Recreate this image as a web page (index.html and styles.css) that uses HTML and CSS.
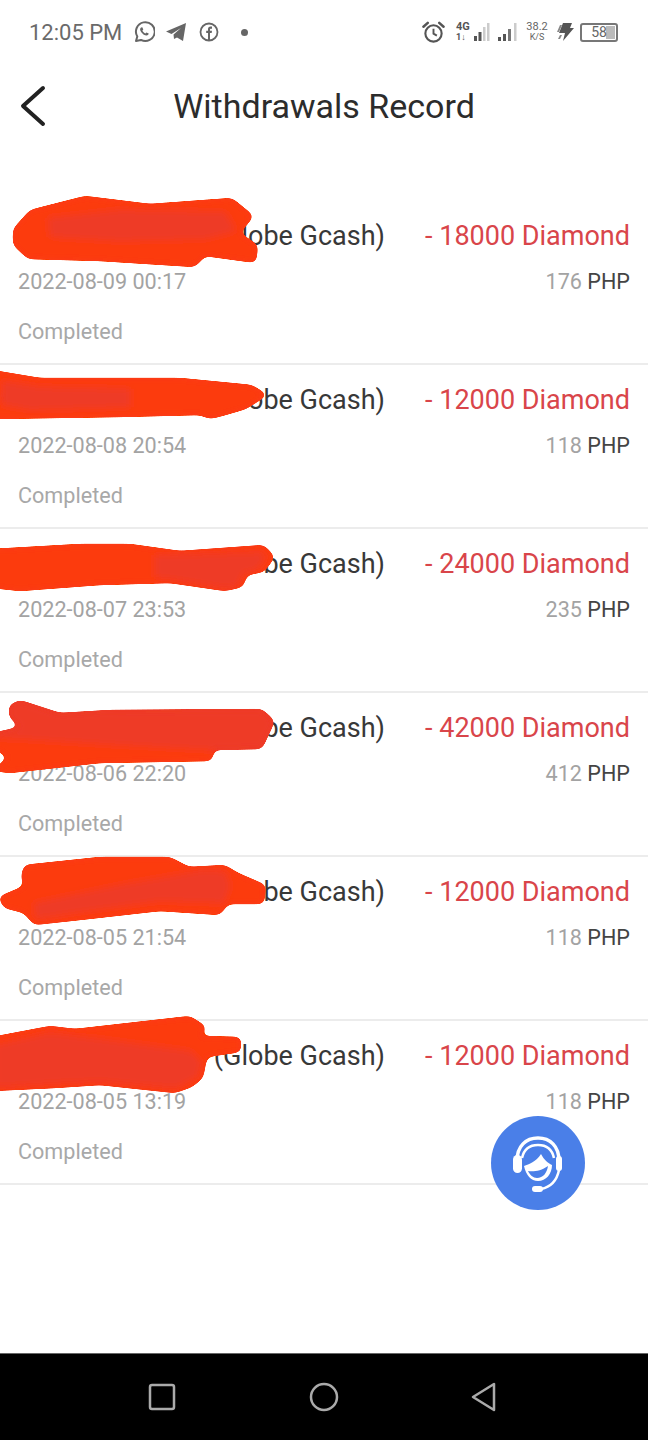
FILE: index.html
```html
<!DOCTYPE html>
<html lang="en">
<head>
  <meta charset="UTF-8">
  <title>Withdrawals Record</title>
  <meta name="viewport" content="width=device-width, initial-scale=1.0">
  <link rel="stylesheet" href="styles.css">
</head>
<body>
<div class="page">

  <!-- rounds off the corners of the marker strokes -->
  <svg class="defs" width="0" height="0">
    <filter id="marker" x="-10%" y="-30%" width="120%" height="160%">
      <feGaussianBlur stdDeviation="3.500"/>
      <feColorMatrix values="1 0 0 0 0  0 1 0 0 0  0 0 1 0 0  0 0 0 16 -7"/>
    </filter>
  </svg>

  <!-- Status bar -->
  <div class="status-bar">
    <div class="status-left">
      <span class="clock">12:05 PM</span>
      <svg class="ic-whatsapp" viewBox="0 0 22 24" width="22" height="24">
        <path d="M3 21l1.300-4.600A9.400 9.400 0 1 1 8 19.900z" fill="none" stroke="#666" stroke-width="2" stroke-linejoin="round"/>
        <path d="M8 7.500c-1.300 1-1.200 2.800.3 4.800s3.600 3.400 5.300 3.300c1.300-.1 2.100-1 2.100-2l-2.300-1.200-1 1c-1.200-.4-2.500-1.800-3-3l.9-1L9.300 7.300z" fill="#666"/>
      </svg>
      <svg class="ic-telegram" viewBox="0 0 22 22" width="22" height="22">
        <path d="M1 10.500L21 2l-3 18-6-3.500-3 1.500-.5-4.500L16 7l-9.500 6z" fill="#666"/>
      </svg>
      <svg class="ic-facebook" viewBox="0 0 20 20" width="20" height="20">
        <circle cx="10" cy="10" r="8.500" fill="none" stroke="#666" stroke-width="1.800"/>
        <path d="M9 18v-7H7.200V8.700H9V7.200C9 5.400 10 4.600 11.500 4.600h1.500v2.200h-1c-.7 0-1 .3-1 1v.9h2l-.3 2.300H11v7z" fill="#666"/>
      </svg>
      <span class="dot"></span>
    </div>
    <div class="status-right">
      <svg class="ic-alarm" viewBox="0 0 24 24" width="23" height="24">
        <circle cx="12" cy="13.500" r="8.500" fill="none" stroke="#555" stroke-width="2.200"/>
        <path d="M12 8.500v5.200l3.500 2" fill="none" stroke="#555" stroke-width="2"/>
        <path d="M1.500 6.500L6 2.500M22.500 6.500L18 2.500" stroke="#555" stroke-width="2.600" stroke-linecap="round"/>
      </svg>
      <div class="net-type">
        <div class="net-text"><span class="net-g">4G</span><span class="net-arrows">1↓</span></div>
        <svg viewBox="0 0 16 20" width="16" height="20">
          <rect x="0" y="14" width="3" height="5" fill="#555"/>
          <rect x="4.500" y="10" width="3" height="9" fill="#555"/>
          <rect x="9" y="5" width="2.500" height="14" fill="#ccc"/>
          <rect x="13" y="1" width="2.500" height="18" fill="#ccc"/>
        </svg>
      </div>
      <svg class="ic-signal" viewBox="0 0 21 20" width="21" height="20">
        <rect x="1" y="15" width="3" height="4" fill="#555"/>
        <rect x="6" y="12" width="3" height="7" fill="#555"/>
        <rect x="11" y="7" width="3" height="12" fill="#777"/>
        <rect x="17" y="1" width="2.500" height="18" fill="#ccc"/>
      </svg>
      <div class="speed"><span>38.2</span><span class="speed-unit">K/S</span></div>
      <svg class="ic-bolt" viewBox="0 0 18 20" width="18" height="20">
        <path d="M6 1h9l-2 5h4L6 19l2-8H2z" fill="#555"/>
        <path d="M3 3h2L2 10H0zM3 13h2l-2 4H1z" fill="#888"/>
      </svg>
      <div class="battery"><span class="battery-level"></span><span class="battery-num">58</span></div>
    </div>
  </div>

  <!-- Header -->
  <div class="header">
    <svg class="back" viewBox="0 0 30 44" width="30" height="44">
      <path d="M25 4L5 22l20 18" fill="none" stroke="#222" stroke-width="4" stroke-linecap="round" stroke-linejoin="round"/>
    </svg>
    <h1>Withdrawals Record</h1>
  </div>

  <!-- Records -->
  <div class="record-list">

    <div class="record">
      <div class="line">
        <span class="title">(Globe Gcash)</span>
        <span class="amount">- 18000 Diamond</span>
      </div>
      <div class="line sub">
        <span>2022-08-09 00:17</span>
        <span>176 <b>PHP</b></span>
      </div>
      <div class="state">Completed</div>
      <svg class="scribble" viewBox="0 0 648 164">
        <g filter="url(#marker)">
          <path class="red-a" d="M13 28L30 9 85-5 150 3 232-3 254 15 240 32 258 44 256 62 205 55 195 66 100 60 28 58 13 44z"/>
          <path class="red-b" d="M48 17L120 9 225 11 236 30 205 38 120 40 50 36z"/>
        </g>
      </svg>
    </div>

    <div class="record">
      <div class="line">
        <span class="title">(Globe Gcash)</span>
        <span class="amount">- 12000 Diamond</span>
      </div>
      <div class="line sub">
        <span>2022-08-08 20:54</span>
        <span>118 <b>PHP</b></span>
      </div>
      <div class="state">Completed</div>
      <svg class="scribble" viewBox="0 0 648 164">
        <g filter="url(#marker)">
          <path class="red-a" d="M-8 5L40 13 180 13 252 20 268 30 246 44 222 51 210 54 200 50 120 52-8 54-8 36 8 33-8 28z"/>
          <path class="red-b" d="M2 16L40 22 130 24 130 42 30 45 2 40z"/>
        </g>
      </svg>
    </div>

    <div class="record">
      <div class="line">
        <span class="title">(Globe Gcash)</span>
        <span class="amount">- 24000 Diamond</span>
      </div>
      <div class="line sub">
        <span>2022-08-07 23:53</span>
        <span>235 <b>PHP</b></span>
      </div>
      <div class="state">Completed</div>
      <svg class="scribble" viewBox="0 0 648 164">
        <g filter="url(#marker)">
          <path class="red-a" d="M-8 20L80 15 130 15 180 22 264 16 275 28 264 43 247 46 243 58 225 62 170 54 100 56 20 62-8 59z"/>
          <path class="red-b" d="M155 26L180 26 262 23 266 28 258 40 243 44 238 56 226 59 172 50 155 48z"/>
        </g>
      </svg>
    </div>

    <div class="record">
      <div class="line">
        <span class="title">(Globe Gcash)</span>
        <span class="amount">- 42000 Diamond</span>
      </div>
      <div class="line sub">
        <span>2022-08-06 22:20</span>
        <span>412 <b>PHP</b></span>
      </div>
      <div class="state">Completed</div>
      <svg class="scribble" viewBox="0 0 648 164">
        <g filter="url(#marker)">
          <path class="red-a" d="M-8 48L20 38 90 41 170 45 214 56 212 68 100 70 10 80-8 78 8 64-8 55z"/>
          <path class="red-b" d="M9 12L20 7 60 20 110 17 262 16 275 28 262 56 213 57 120 52 20 46-8 45-8 40 20 34 9 24z"/>
        </g>
      </svg>
    </div>

    <div class="record">
      <div class="line">
        <span class="title">(Globe Gcash)</span>
        <span class="amount">- 12000 Diamond</span>
      </div>
      <div class="line sub">
        <span>2022-08-05 21:54</span>
        <span>118 <b>PHP</b></span>
      </div>
      <div class="state">Completed</div>
      <svg class="scribble" viewBox="0 0 648 164">
        <g filter="url(#marker)">
          <path class="red-a" d="M24 8L100 0 170 0 189 10 225 8 238 16 266 28 264 47 228 47 220 58 160 54 80 63 34 68 24 56 4 51-2 40 24 29 21 20z"/>
          <path class="red-b" d="M34 46L120 28 205 13 226 15 230 30 224 46 160 44 80 55 36 62z"/>
        </g>
      </svg>
    </div>

    <div class="record">
      <div class="line">
        <span class="title">(Globe Gcash)</span>
        <span class="amount">- 12000 Diamond</span>
      </div>
      <div class="line sub">
        <span>2022-08-05 13:19</span>
        <span>118 <b>PHP</b></span>
      </div>
      <div class="state">Completed</div>
      <svg class="scribble" viewBox="0 0 648 164">
        <g filter="url(#marker)">
          <path class="red-a" d="M-8 16L50 5 75 8 190-5 207 6 200 15 241 16 241 31 207 36 203 57 192 66 175 72 100 64 55 67-8 70z"/>
          <path class="red-b" d="M-4 24L50 12 100 18 190 30 201 40 198 55 176 67 100 60 55 62-4 66z"/>
        </g>
      </svg>
    </div>

  </div>

  <!-- Customer service button -->
  <div class="fab">
    <svg viewBox="0 0 94 94" width="94" height="94">
      <path d="M26 45C26 30 35 22 47 22s21 8 21 23" fill="none" stroke="#fff" stroke-width="3.500"/>
      <path d="M31 42C33 33 39 29 47 29s14 4 16 13" fill="none" stroke="#fff" stroke-width="2.500"/>
      <rect x="22" y="39" width="9" height="18" rx="4.500" fill="#fff"/>
      <rect x="65" y="40" width="6" height="15" rx="3" fill="#fff"/>
      <path d="M33 50C38 48 45 46 50 38c3 6 7 9 11 11 0 9-6 16-14 16-7 0-12-6-14-15z" fill="#fff"/>
      <path d="M37 55c5 1 13 0 20-5-1 7-5 12-11 12-4 0-7-3-9-7z" fill="#4a7fe8"/>
      <path d="M68 54C66 64 60 71 50 73" fill="none" stroke="#fff" stroke-width="2.500"/>
      <rect x="41" y="70" width="11" height="6" rx="3" fill="#fff"/>
    </svg>
  </div>

  <!-- Android nav bar -->
  <div class="nav-bar">
    <svg viewBox="0 0 28 28" width="28" height="28">
      <rect x="2" y="2" width="24" height="24" rx="2" fill="none" stroke="#aaa" stroke-width="2.500"/>
    </svg>
    <svg viewBox="0 0 30 30" width="30" height="30">
      <circle cx="15" cy="15" r="13" fill="none" stroke="#aaa" stroke-width="2.500"/>
    </svg>
    <svg viewBox="0 0 26 30" width="26" height="30">
      <path d="M2 15L23 2v26z" fill="none" stroke="#aaa" stroke-width="2.500" stroke-linejoin="round"/>
    </svg>
  </div>

</div>
</body>
</html>
```

FILE: styles.css
```css
* {
  box-sizing: border-box;
}

body {
  margin: 0;
  background: #fff;
  font-family: 'Roboto', 'Liberation Sans', sans-serif;
  color: #333;
}

.page {
  position: relative;
  display: flex;
  flex-direction: column;
  min-height: 1440px;
}

.defs {
  position: absolute;
}

/* Status bar */
.status-bar {
  height: 64px;
  display: flex;
  justify-content: space-between;
  align-items: center;
  padding: 0 30px 0 29px;
  color: #666;
}

.status-left,
.status-right {
  display: flex;
  align-items: center;
}

.clock {
  font-size: 22px;
  width: 104px;
  color: #6a6a6a;
}

.ic-telegram {
  margin-left: 10px;
}

.ic-facebook {
  margin-left: 12px;
}

.dot {
  width: 7px;
  height: 7px;
  margin-left: 22px;
  border-radius: 50%;
  background: #666;
}

.net-type {
  display: flex;
  align-items: flex-end;
  margin-left: 11px;
}

.net-text {
  display: flex;
  flex-direction: column;
  width: 18px;
  color: #555;
  font-weight: 700;
  line-height: 10px;
}

.net-g {
  font-size: 11px;
}

.net-arrows {
  font-size: 9px;
}

.ic-signal {
  margin-left: 7px;
}

.speed {
  display: flex;
  flex-direction: column;
  align-items: center;
  width: 24px;
  margin-left: 7px;
  font-size: 11px;
  line-height: 11px;
  color: #666;
}

.speed-unit {
  font-size: 9px;
}

.ic-bolt {
  margin-left: 8px;
}

.battery {
  position: relative;
  width: 38px;
  height: 19px;
  margin-left: 5px;
  border: 2px solid #777;
  border-radius: 3px;
  text-align: center;
  font-size: 14px;
  line-height: 15px;
  color: #666;
}

.battery-level {
  position: absolute;
  top: 1px;
  left: 24px;
  bottom: 1px;
  right: 1px;
  background: #bbb;
}

.battery-num {
  position: relative;
}

/* Header */
.header {
  position: relative;
  height: 84px;
  display: flex;
  align-items: center;
  justify-content: center;
}

.back {
  position: absolute;
  left: 18px;
  top: 20px;
}

h1 {
  margin: 0;
  font-size: 34px;
  font-weight: 400;
  color: #2c2c2c;
}

/* Records */
.record-list {
  margin-top: 53px;
}

.record {
  position: relative;
  height: 164px;
  padding: 18px 18px 0;
  border-bottom: 2px solid #ececec;
}

.line {
  display: flex;
  justify-content: space-between;
}

.title {
  width: 367px;
  font-size: 27px;
  line-height: 34px;
  text-align: right;
  color: #383838;
}

.amount {
  font-size: 27px;
  line-height: 34px;
  color: #d9454a;
}

.sub {
  margin-top: 15px;
  font-size: 21.600px;
  line-height: 28px;
  color: #a3a3a3;
}

.sub b {
  font-weight: 400;
  color: #444;
}

.state {
  margin-top: 22px;
  font-size: 21.600px;
  line-height: 28px;
  color: #a8a8a8;
}

/* Red marker strokes over the names */
.scribble {
  position: absolute;
  top: 0;
  left: 0;
  width: 648px;
  height: 164px;
  overflow: visible;
}

.red-a {
  fill: #fc3a0c;
}

.red-b {
  fill: #ee3a28;
}

/* Floating button */
.fab {
  position: absolute;
  left: 491px;
  top: 1116px;
  width: 94px;
  height: 94px;
  border-radius: 50%;
  background: #4a7fe8;
}

/* Nav bar */
.nav-bar {
  margin-top: auto;
  height: 87px;
  display: flex;
  align-items: center;
  justify-content: space-between;
  padding: 0 151px 0 148px;
  background: #000;
  border-top: 1px solid #666;
}
```
